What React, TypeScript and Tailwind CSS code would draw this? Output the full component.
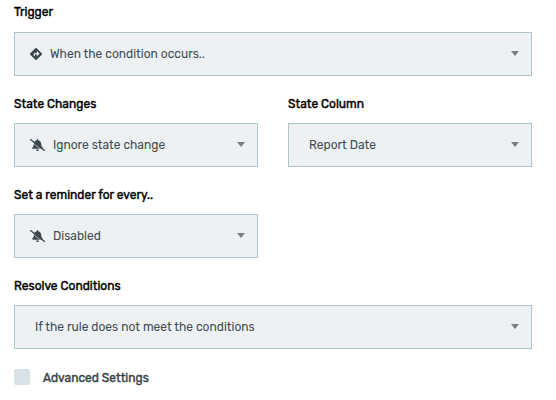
import type { ReactNode } from "react";
import { FaDiamondTurnRight } from "react-icons/fa6";

type FieldProps = {
  label: string;
  value: string;
  valueClass: string;
  className?: string;
  icon?: ReactNode;
};

function Field({ label, value, valueClass, className = "gap-[11px]", icon }: FieldProps) {
  return (
    <div className={`flex w-full flex-col ${className}`}>
      <label className="h-4 origin-left scale-y-[1.06] text-[12px] leading-4 font-normal whitespace-nowrap text-black [-webkit-text-stroke:0.4px_currentColor]">
        {label}
      </label>
      <button
        type="button"
        className="flex h-11 w-full items-center border border-[#b0c4cb] bg-[#edf1f4] pr-3 pl-[15px] text-left text-[12px] leading-4 text-[#414b50]"
      >
        {icon}
        <span className={`origin-left scale-y-[1.07] whitespace-nowrap ${valueClass}`}>{value}</span>
        <svg className="mb-px ml-auto h-[5px] w-2" viewBox="0 0 8 5" fill="#7b7d7f">
          <path d="M0 0h8L4 5z" />
        </svg>
      </button>
    </div>
  );
}

function MutedBell() {
  return (
    <svg className="mb-px h-3 w-[15px] shrink-0" viewBox="0 0 640 512" fill="#3b474d">
      <path d="M320 0c-18 0-32 14-32 32v19c-73 15-128 79-128 157 0 97-30 121-54 148-7 8-10 18-10 28 0 16 13 32 32 32h384c19 0 32-16 32-32 0-10-3-20-10-28-24-27-54-51-54-148 0-78-55-142-128-157V32c0-18-14-32-32-32zM256 448a64 64 0 0 0 128 0z" />
      <path d="M0 76l600 464" stroke="#edf1f4" strokeWidth="28" />
      <path d="M24 24l592 464" stroke="#3b474d" strokeWidth="56" strokeLinecap="round" />
    </svg>
  );
}

export default function App() {
  return (
    <main className="h-[400px] w-[556px] bg-white pt-1 pr-6 pl-3.5 font-['Rubik','Roboto',sans-serif]">
      <div className="flex flex-col gap-5">
        <Field
          label="Trigger"
          value="When the condition occurs.."
          valueClass="ml-2"
          className="gap-3"
          icon={<FaDiamondTurnRight className="size-3 shrink-0 text-[#3b474d]" />}
        />
        <div className="grid grid-cols-2 gap-[30px]">
          <Field label="State Changes" value="Ignore state change" valueClass="ml-2" icon={<MutedBell />} />
          <Field label="State Column" value="Report Date" valueClass="ml-[5px]" />
        </div>
        <div className="w-[244px]">
          <Field label="Set a reminder for every.." value="Disabled" valueClass="ml-2" icon={<MutedBell />} />
        </div>
        <Field label="Resolve Conditions" value="If the rule does not meet the conditions" valueClass="ml-[5px]" />
        <label className="flex h-4 items-center">
          <span className="size-4 rounded-[2px] bg-[#d8e1e6]" />
          <span className="mt-0.5 ml-[13px] origin-left scale-y-[1.06] text-[12px] leading-4 font-normal whitespace-nowrap text-[#37434a] [-webkit-text-stroke:0.4px_currentColor]">
            Advanced Settings
          </span>
        </label>
      </div>
    </main>
  );
}
